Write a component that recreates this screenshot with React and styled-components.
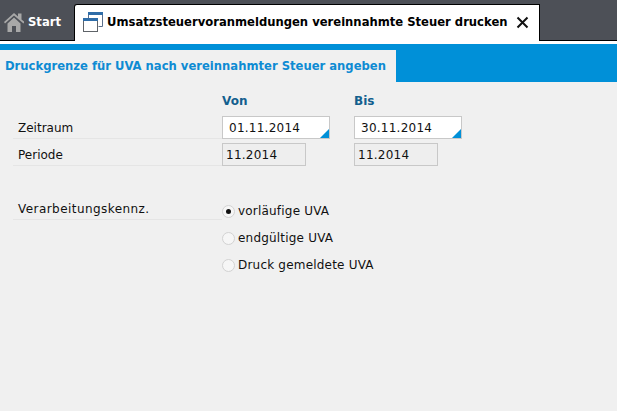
import React from 'react';
import styled, { createGlobalStyle } from 'styled-components';

const Global = createGlobalStyle`
  html, body { margin: 0; padding: 0; background: #f0f0f0; }
  body { font-family: "DejaVu Sans", Verdana, sans-serif; font-size: 12px; color: #111; }
`;
const Page = styled.div`width: 617px; height: 411px; overflow: hidden; background: #f0f0f0;`;
const TabBar = styled.div`
  height: 40px; background: #4d5057; border-bottom: 1px solid #000;
  display: flex; align-items: flex-end;
`;
const StartTab = styled.div`
  width: 74px; height: 40px; display: flex; align-items: center; padding: 4px 0 0 4px; gap: 4px;
  box-sizing: border-box; color: #fff; font-weight: 700; font-size: 11.6px;
`;
const TabIcon = styled.svg`width: 20px; height: 20px; flex: none;`;
const ActiveTab = styled.div`
  width: 466px; height: 37px; margin-bottom: -1px; padding: 7px 10px 0 8px; box-sizing: border-box;
  background: #fff; border: 1px solid #000; border-bottom: none; border-radius: 3px 0 0 0;
  display: flex; align-items: flex-start; gap: 4px; position: relative; z-index: 1;
  font-weight: 700; font-size: 11.6px; line-height: 20px; color: #000; white-space: nowrap;
`;
const Close = styled.svg`width: 13px; height: 13px; margin: 4px 0 0 auto; flex: none;`;
const Gap = styled.div`height: 3px; background: #fff;`;
const Band = styled.div`height: 38px; background: #0090d8; display: flex; align-items: flex-end;`;
const Title = styled.div`
  width: 396px; height: 32px; background: #f0f0f0; display: flex; align-items: center; padding-left: 5px;
  box-sizing: border-box; color: #0e8bd3; font-weight: 700; font-size: 11.6px; white-space: nowrap;
`;
const Form = styled.div`
  display: grid; grid-template-columns: 209px 132px 110px; padding: 11px 0 0 13px;
`;
const Head = styled.div`
  color: #135f8e; font-weight: 700; font-size: 12px; height: 22px; line-height: 16px;
`;
const Label = styled.div`
  height: 24px; box-sizing: border-box; line-height: 20px; padding: 3px 0 0 5px; white-space: nowrap;
  border-bottom: 1px solid #e5e5e5; letter-spacing: ${p => p.$spread || 0}px;
`;
const Cell = styled.div`height: 27px;`;
const HeadBlank = styled.div`height: 22px;`;
const Spacer = styled.div`grid-column: 1 / -1; height: ${p => p.$h}px;`;
const Input = styled.div`
  width: 108px; height: 23px; margin-top: 1px; box-sizing: border-box; background: #fff; border: 1px solid #c8c8c8;
  padding-left: 6px; line-height: 23px; position: relative; letter-spacing: .25px;
  &::after { content: ''; position: absolute; right: 0; bottom: 0; border-style: solid; border-width: 0 0 9px 9px;
    border-color: transparent transparent #0090d8 transparent; }
`;
const ReadOnly = styled.div`
  width: 84px; height: 23px; margin-top: 1px; box-sizing: border-box; border: 1px solid #c8c8c8; background: #eeeeee;
  padding-left: 3px; line-height: 22px; letter-spacing: .25px;
`;
const Radios = styled.div`grid-column: 2 / 4; display: flex; flex-direction: column; margin-top: 2px;`;
const RadioRow = styled.div`height: 27px; display: flex; align-items: center; gap: 3px; white-space: nowrap; letter-spacing: .2px;`;
const RadioText = styled.span`margin-top: -1px;`;
const Dot = styled.span`
  width: 13px; height: 13px; border-radius: 50%; box-sizing: border-box; border: 1px solid #d2d2d2; background: #f6f6f6;
  display: flex; align-items: center; justify-content: center; flex: none;
  &::after { content: ''; width: 5px; height: 5px; border-radius: 50%; background: ${p => p.$on ? '#111' : 'transparent'}; }
`;

export default function App() {
  return (
    <Page>
      <Global />
      <TabBar>
        <StartTab>
          <TabIcon viewBox="0 0 20 20" aria-hidden="true">
            <path d="M0 10 10 1l4 3.500V1.500h3.500V7.500L20.500 10 19.500 11.500 10 3.500 1 11.500z" fill="#a8a8a8" />
            <path d="M3.500 11.500 10 5.500l6.500 6V20H12v-6H8v6H3.500z" fill="#a8a8a8" />
          </TabIcon>
          Start
        </StartTab>
        <ActiveTab>
          <TabIcon viewBox="0 0 20 20" aria-hidden="true">
            <path d="M5.500 6V.5h14v14h-4" fill="none" stroke="#5a6f8c" />
            <rect x="5" y="0" width="15" height="3" fill="#2f6da8" />
            <rect x=".5" y="6.500" width="14" height="13" fill="#fff" stroke="#5f6368" />
            <rect x="0" y="6" width="15" height="3" fill="#2f6da8" />
          </TabIcon>
          Umsatzsteuervoranmeldungen vereinnahmte Steuer drucken
          <Close viewBox="0 0 13 13" aria-hidden="true">
            <path d="M1.500 1.500l10 10M11.500 1.500l-10 10" stroke="#111" strokeWidth="2" />
          </Close>
        </ActiveTab>
      </TabBar>
      <Gap />
      <Band><Title>Druckgrenze für UVA nach vereinnahmter Steuer angeben</Title></Band>
      <Form>
        <HeadBlank /><Head>Von</Head><Head>Bis</Head>
        <Cell><Label>Zeitraum</Label></Cell><Cell><Input>01.11.2014</Input></Cell><Cell><Input>30.11.2014</Input></Cell>
        <Cell><Label>Periode</Label></Cell><Cell><ReadOnly>11.2014</ReadOnly></Cell><Cell><ReadOnly>11.2014</ReadOnly></Cell>
        <Spacer $h={27} />
        <Cell><Label $spread={0.44}>Verarbeitungskennz.</Label></Cell>
        <Radios>
          <RadioRow><Dot $on /><RadioText>vorläufige UVA</RadioText></RadioRow>
          <RadioRow><Dot /><RadioText>endgültige UVA</RadioText></RadioRow>
          <RadioRow><Dot /><RadioText>Druck gemeldete UVA</RadioText></RadioRow>
        </Radios>
      </Form>
    </Page>
  );
}
